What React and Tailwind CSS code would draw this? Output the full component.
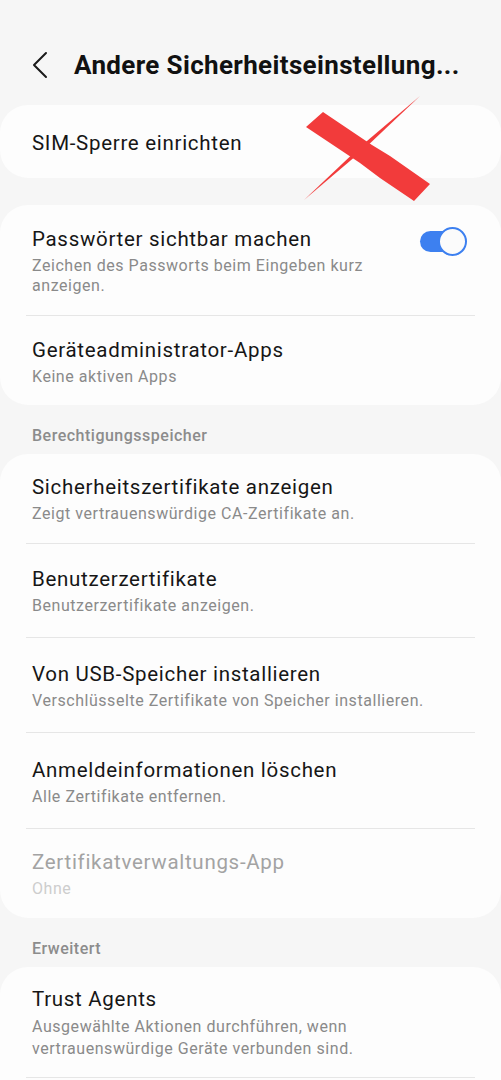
import React from 'react';

function Row({ title, sub, disabled, toggle, pt = 'pt-[23px]', pb = 'pb-[21px]', subLeading = 'leading-[20px]' }) {
  return (
    <div className={`flex items-center pl-8 pr-[34px] ${pt} ${pb}`}>
      <div className="flex-1 min-w-0">
        <p className={`text-[20.5px] leading-[26px] tracking-[0.7px] ${disabled ? 'text-[#a3a3a3]' : 'text-[#161616]'}`}>{title}</p>
        {sub && (
          <p className={`mt-1 text-[16px] ${subLeading} tracking-[0.55px] ${disabled ? 'text-[#cdcdcd]' : 'text-[#8a8a8a]'} ${toggle ? 'pr-12' : 'pr-2'}`}>{sub}</p>
        )}
      </div>
      {toggle && (
        <div className="relative w-[47px] h-[29px] shrink-0 self-start mt-[1px]">
          <div className="absolute left-0 top-[4px] w-[44px] h-[21px] rounded-full bg-[#3d80f0]" />
          <div className="absolute right-0 top-0 w-[29px] h-[29px] rounded-full bg-[#fbfbfb] border-2 border-[#3d80f0]" />
        </div>
      )}
    </div>
  );
}

const Divider = () => <div className="mx-[26px] h-px bg-[#e6e6e6]" />;

function Card({ children }) {
  return <div className="bg-[#fdfdfd] rounded-[28px] overflow-hidden">{children}</div>;
}

function Section({ label }) {
  return <p className="pl-8 mt-[21px] mb-[8px] text-[16px] leading-[20px] font-medium tracking-[0.5px] text-[#8c8c8c]">{label}</p>;
}

export default function App() {
  return (
    <div className="relative min-h-[1080px] bg-[#f6f6f6] overflow-hidden font-['Roboto',sans-serif]">
      <header className="flex items-center pt-[48px] pb-[23px]">
        <svg className="ml-[31px]" width="18" height="28" viewBox="0 0 18 28" fill="none">
          <path d="M15 2 L3 14 L15 26" stroke="#1a1a1a" strokeWidth="2" strokeLinecap="round" strokeLinejoin="round" />
        </svg>
        <h1 className="ml-[25px] text-[26px] leading-[34px] font-bold text-[#111] tracking-[0.35px] whitespace-nowrap">
          Andere Sicherheitseinstellung...
        </h1>
      </header>

      <Card>
        <div className="pl-8 pt-[25px] pb-[21px]">
          <p className="text-[20.5px] leading-[27px] tracking-[0.7px] text-[#161616]">SIM-Sperre einrichten</p>
        </div>
      </Card>

      <div className="h-[27px]" />

      <Card>
        <Row
          title="Passwörter sichtbar machen"
          sub="Zeichen des Passworts beim Eingeben kurz anzeigen."
          toggle
          pt="pt-[21px]"
          pb="pb-[19px]"
        />
        <Divider />
        <Row title="Geräteadministrator-Apps" sub="Keine aktiven Apps" pt="pt-[21px]" pb="pb-[18px]" />
      </Card>

      <Section label="Berechtigungsspeicher" />

      <Card>
        <Row
          title="Sicherheitszertifikate anzeigen"
          sub="Zeigt vertrauenswürdige CA-Zertifikate an."
          pt="pt-[20px]"
          pb="pb-[19px]"
        />
        <Divider />
        <Row title="Benutzerzertifikate" sub="Benutzerzertifikate anzeigen." pt="pt-[22px]" />
        <Divider />
        <Row title="Von USB-Speicher installieren" sub="Verschlüsselte Zertifikate von Speicher installieren." />
        <Divider />
        <Row title="Anmeldeinformationen löschen" sub="Alle Zertifikate entfernen." pt="pt-[24px]" />
        <Divider />
        <Row title="Zertifikatverwaltungs-App" sub="Ohne" disabled pt="pt-[20px]" pb="pb-[19px]" />
      </Card>

      <Section label="Erweitert" />

      <Card>
        <Row
          title="Trust Agents"
          sub="Ausgewählte Aktionen durchführen, wenn vertrauenswürdige Geräte verbunden sind."
          subLeading="leading-[22px]"
          pt="pt-[19px]"
          pb="pb-[17px]"
        />
        <Divider />
        <div className="h-20" />
      </Card>

      {/* red cross drawn over the SIM row */}
      <svg className="absolute left-0 top-0 pointer-events-none" width="501" height="220" viewBox="0 0 501 220">
        <polygon points="420,96 363.5,149.5 304,200 360.5,146.5" fill="#f23b3b" />
        <polygon points="306,127 323,112 372,145 390,156 430,184 414,201 380,178 360,163" fill="#f23b3b" />
      </svg>
    </div>
  );
}
